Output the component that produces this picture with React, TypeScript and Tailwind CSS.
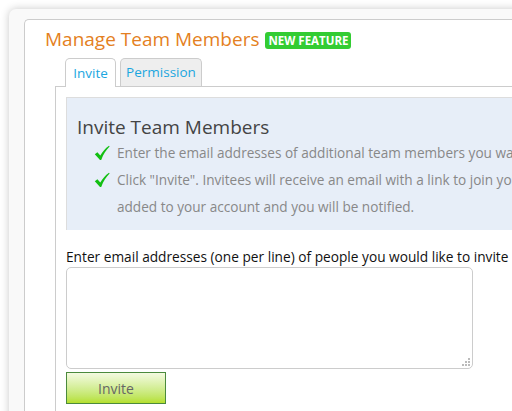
import React from "react";

const Check = () => (
  <svg width="16" height="16" viewBox="0 0 16 16" className="shrink-0">
    <path d="M0.8 9.2 L3.4 7.2 L6.3 10.6 C8.6 6.6 11.2 3.4 15 0.8 L15.6 1.6 C12.2 4.8 9.4 9.2 7.2 15 L6 15 Z" fill="#12bf12" />
  </svg>
);

export default function App() {
  return (
    <div
      className="w-[512px] h-[411px] overflow-hidden bg-white pl-[9px] pt-[9px]"
      style={{ fontFamily: '"Open Sans", sans-serif' }}
    >
      <div className="h-[420px] w-[540px] rounded-tl-[7px] bg-[#f9f9f9] pl-[15px] pt-[10px] shadow-[0_0_9px_rgba(0,0,0,0.22)]">
        <div className="h-full rounded-tl-[5px] border-l border-t border-[#cccccc] bg-white pt-[7px]">
          <div className="flex items-center pl-[20px] h-[24px]">
            <span className="text-[19px] text-[#e47f22] leading-none">Manage Team Members</span>
            <span className="ml-[6px] mt-[3px] rounded-[3px] bg-[#33cc33] px-[3px] py-[2px] text-[11.5px] font-bold leading-[13px] text-white">
              NEW FEATURE
            </span>
          </div>
          <div className="mt-[7px] flex pl-[40px] h-[28px] items-end">
            <div className="relative z-10 -mb-px flex h-[29px] w-[51px] items-center justify-center rounded-t-[5px] border border-b-0 border-[#cccccc] bg-white text-[13.5px] text-[#1ba6df]">
              Invite
            </div>
            <div className="ml-[4px] flex h-[28px] w-[82px] items-center justify-center rounded-t-[5px] border border-b-0 border-[#cccccc] bg-[#eeeeee] text-[13.5px] text-[#1ba6df]">
              Permission
            </div>
          </div>
          <div className="ml-[30px] h-full border-l border-t border-[#cccccc] pl-[10px] pt-[10px]">
            <div className="h-[133px] border-l border-t border-[#dddddd] bg-[#e7eef8] pl-[10px] pt-[18px]">
              <div className="text-[19px] leading-[22px] text-[#444444]">Invite Team Members</div>
              <div className="mt-[2px] pl-[17px] text-[13.6px] text-[#888888] whitespace-nowrap">
                <div className="flex items-center gap-[7px] h-[26px]">
                  <Check />
                  <span>Enter the email addresses of additional team members you want to invite.</span>
                </div>
                <div className="flex items-center gap-[7px] h-[28px]">
                  <Check />
                  <span>Click "Invite". Invitees will receive an email with a link to join your account.</span>
                </div>
                <div className="pl-[23px] h-[26px] flex items-center">
                  added to your account and you will be notified.
                </div>
              </div>
            </div>
            <div className="mt-[18px] text-[13.7px] leading-[18px] text-[#111111] whitespace-nowrap">
              Enter email addresses (one per line) of people you would like to invite
            </div>
            <div className="relative mt-[1px] h-[102px] w-[407px]">
              <textarea className="block h-full w-full resize-none rounded-[5px] border border-[#cccccc] bg-white outline-none" />
              <svg className="absolute right-[2px] bottom-[2px]" width="10" height="10" viewBox="0 0 10 10">
                <rect x="7" y="1" width="2" height="2" fill="#bbbbbb" />
                <rect x="4" y="4" width="2" height="2" fill="#bbbbbb" />
                <rect x="7" y="4" width="2" height="2" fill="#bbbbbb" />
                <rect x="1" y="7" width="2" height="2" fill="#bbbbbb" />
                <rect x="4" y="7" width="2" height="2" fill="#bbbbbb" />
                <rect x="7" y="7" width="2" height="2" fill="#bbbbbb" />
              </svg>
            </div>
            <button className="mt-[3px] block h-[32px] w-[100px] border border-[#4b8a3c] bg-gradient-to-b from-[#f4fae0] to-[#b5e02a] text-[14px] text-[#666666]">
              Invite
            </button>
          </div>
        </div>
      </div>
    </div>
  );
}
